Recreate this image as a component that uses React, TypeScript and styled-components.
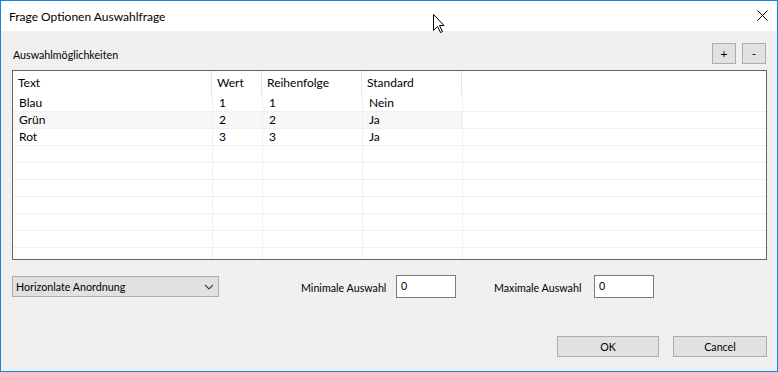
import React from "react";
import styled, { createGlobalStyle } from "styled-components";

const Global = createGlobalStyle`
  html, body { margin: 0; padding: 0; background: #ffffff; }
  body { font-family: Lato, "Open Sans", "Liberation Sans", sans-serif; font-size: 12px; color: #000; }
  * { box-sizing: border-box; }
`;

const Window = styled.div`
  position: relative;
  width: 778px;
  height: 372px;
  border: 1px solid #1883d7;
  display: flex;
  flex-direction: column;
  background: #f0f0f0;
  overflow: hidden;
`;

const TitleBar = styled.div`
  height: 30px;
  background: #ffffff;
  display: flex;
  align-items: center;
  justify-content: space-between;
  padding: 0 9px 0 8px;
`;

const Title = styled.span`
  font-size: 12px;
  color: #000;
  margin-top: 0px;
`;

const CloseIcon = styled.svg`
  width: 11px;
  height: 11px;
  margin-top: -1px;
`;

const Body = styled.div`
  flex: 1;
  display: flex;
  flex-direction: column;
  padding: 12px 10px 0 11px;
`;

const SectionHeader = styled.div`
  display: flex;
  align-items: flex-end;
  justify-content: space-between;
  height: 21px;
  padding-right: 1px;
`;

const SectionLabel = styled.span`
  font-size: 10.7px;
  line-height: 14px;
  margin-left: 1px;
  margin-bottom: 2px;
`;

const ToolButtons = styled.div`
  display: flex;
  gap: 6px;
`;

const SmallButton = styled.button`
  width: 24px;
  height: 21px;
  border: 1px solid #adadad;
  background: #e1e1e1;
  font-family: inherit;
  font-size: 12px;
  padding: 0;
  color: #000;
  display: flex;
  align-items: center;
  justify-content: center;
`;

const Table = styled.div`
  margin-top: 6px;
  height: 190px;
  border: 1px solid #646464;
  background: #ffffff;
  display: flex;
  flex-direction: column;
  overflow: hidden;
`;

const Row = styled.div<{ $shade?: boolean }>`
  display: grid;
  grid-template-columns: 200px 50px 100px 100px 1fr;
  height: 17px;
  flex: none;
  border-bottom: 1px solid #f0f0f0;
  & > div:not(:last-child) {
    background: ${(p) => (p.$shade ? "#f7f7f7" : "#ffffff")};
  }
`;

const HeaderRow = styled.div`
  display: grid;
  grid-template-columns: 199px 50px 100px 100px 1fr;
  height: 24px;
  flex: none;
`;

const HeaderCell = styled.div<{ $last?: boolean }>`
  border-right: ${(p) => (p.$last ? "none" : "1px solid #e5e5e5")};
  padding-left: 5px;
  display: flex;
  align-items: center;
  font-size: 12px;
  padding-bottom: 1px;
  white-space: nowrap;
`;

const Cell = styled.div<{ $last?: boolean }>`
  border-right: ${(p) => (p.$last ? "none" : "1px solid #f0f0f0")};
  padding-left: 6px;
  display: flex;
  align-items: center;
  font-size: 12px;
  line-height: 16px;
  white-space: nowrap;
`;

const Controls = styled.div`
  display: flex;
  align-items: center;
  height: 23px;
  margin-top: 15px;
`;

const Combo = styled.div`
  width: 207px;
  height: 21px;
  border: 1px solid #adadad;
  background: #e1e1e1;
  display: flex;
  align-items: center;
  justify-content: space-between;
  padding: 0 4px 0 3px;
  font-size: 10.7px;
`;

const Chevron = styled.svg`
  width: 10px;
  height: 6px;
`;

const FieldLabel = styled.span<{ $w: number; $ml: number }>`
  width: ${(p) => p.$w}px;
  margin-left: ${(p) => p.$ml}px;
  font-size: 10.7px;
  white-space: nowrap;
  padding-top: 1px;
`;

const NumberBox = styled.div`
  width: 60px;
  height: 23px;
  border: 1px solid #7a7a7a;
  background: #ffffff;
  padding: 2px 0 0 4px;
  font-size: 10.7px;
  line-height: 16px;
`;

const Footer = styled.div`
  display: flex;
  justify-content: flex-end;
  gap: 14px;
  margin-top: 38px;
`;

const DialogButton = styled.button<{ $w: number }>`
  width: ${(p) => p.$w}px;
  height: 21px;
  border: 1px solid #adadad;
  background: #e1e1e1;
  font-family: inherit;
  font-size: 10.7px;
  color: #000;
  padding: 0;
`;

const Cursor = styled.svg`
  position: absolute;
  left: 431px;
  top: 12px;
  width: 13px;
  height: 21px;
`;

const data = [
  ["Blau", "1", "1", "Nein"],
  ["Grün", "2", "2", "Ja"],
  ["Rot", "3", "3", "Ja"],
];

export default function App() {
  const rows: string[][] = [...data];
  while (rows.length < 10) rows.push(["", "", "", ""]);
  return (
    <>
      <Global />
      <Window>
        <TitleBar>
          <Title>Frage Optionen Auswahlfrage</Title>
          <CloseIcon viewBox="0 0 11 11">
            <path d="M0.5 0.5 L10.5 10.5 M10.5 0.5 L0.5 10.5" stroke="#000" strokeWidth="1" fill="none" />
          </CloseIcon>
        </TitleBar>
        <Body>
          <SectionHeader>
            <SectionLabel>Auswahlmöglichkeiten</SectionLabel>
            <ToolButtons>
              <SmallButton>+</SmallButton>
              <SmallButton>-</SmallButton>
            </ToolButtons>
          </SectionHeader>
          <Table>
            <HeaderRow>
              <HeaderCell>Text</HeaderCell>
              <HeaderCell>Wert</HeaderCell>
              <HeaderCell>Reihenfolge</HeaderCell>
              <HeaderCell>Standard</HeaderCell>
              <HeaderCell $last />
            </HeaderRow>
            {rows.map((r, i) => (
              <Row key={i} $shade={i === 1}>
                <Cell>{r[0]}</Cell>
                <Cell>{r[1]}</Cell>
                <Cell>{r[2]}</Cell>
                <Cell>{r[3]}</Cell>
                <Cell $last />
              </Row>
            ))}
          </Table>
          <Controls>
            <Combo>
              <span>Horizonlate Anordnung</span>
              <Chevron viewBox="0 0 10 6">
                <path d="M1 1 L5 5 L9 1" stroke="#404040" strokeWidth="1.1" fill="none" />
              </Chevron>
            </Combo>
            <FieldLabel $w={95} $ml={82}>Minimale Auswahl</FieldLabel>
            <NumberBox>0</NumberBox>
            <FieldLabel $w={100} $ml={38}>Maximale Auswahl</FieldLabel>
            <NumberBox>0</NumberBox>
          </Controls>
          <Footer>
            <DialogButton $w={102}>OK</DialogButton>
            <DialogButton $w={94}>Cancel</DialogButton>
          </Footer>
        </Body>
        <Cursor viewBox="0 0 13 21">
          <path d="M1.5 1.5 L1.5 17.5 L5.5 13.5 L8.5 19.5 L10.5 18.5 L7.5 12.5 L12 12.5 Z" fill="#fff" stroke="#000" strokeWidth="1" strokeLinejoin="miter" />
        </Cursor>
      </Window>
    </>
  );
}
